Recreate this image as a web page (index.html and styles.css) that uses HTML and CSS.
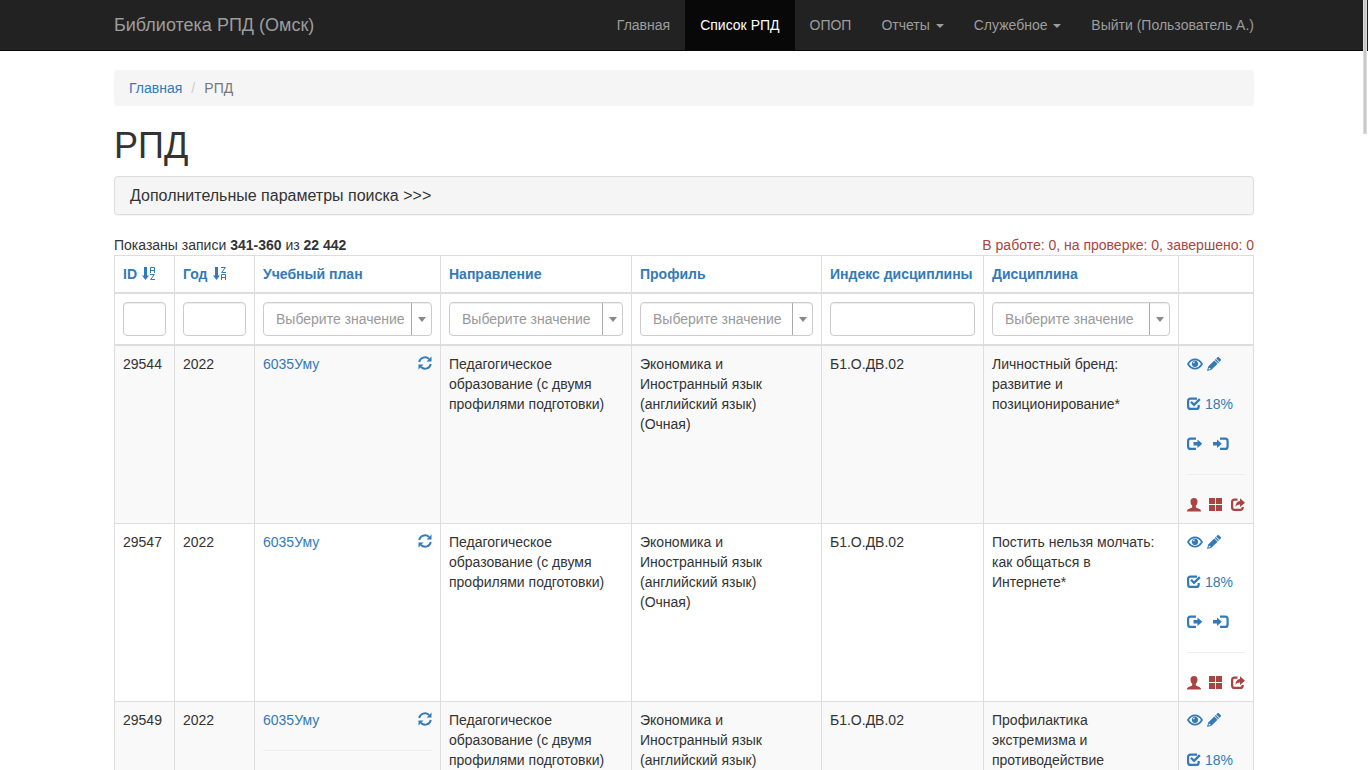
FILE: index.html
```html
<!DOCTYPE html>
<html lang="ru">
<head>
<meta charset="utf-8">
<meta name="viewport" content="width=device-width, initial-scale=1">
<title>РПД</title>
<link rel="stylesheet" href="styles.css">
</head>
<body>
<svg class="sprite" aria-hidden="true">
  <symbol id="eye" viewBox="0 0 16 14"><path fill="none" stroke="currentColor" stroke-width="1.700" d="M1 7C2.800 4 5.200 2.400 8 2.400S13.200 4 15 7c-1.800 3-4.200 4.600-7 4.600S2.800 10 1 7z"/><path fill-rule="evenodd" d="M8 3.600a3.200 3.200 0 1 0 .01 0zM7.800 4.400c-1.100 0-1.900.8-1.900 1.900h1c0-.6.300-.9.900-.9z"/></symbol>
  <symbol id="pencil" viewBox="0 0 14 14"><path d="M10.300.4c.6-.6 1.200-.6 1.800 0l1.500 1.500c.6.600.6 1.200 0 1.800l-1.100 1.100L9.200 1.500zM8.700 2l3.300 3.300-.9.900-3.300-3.300zM7.300 3.400l3.300 3.300-6.200 6.100L0 14l1.200-4.400zM2 10.500l-.5 1.600.5.500 1.500-.5-.2-1-1-.1z"/></symbol>
  <symbol id="check" viewBox="0 0 14 14"><path fill="none" stroke="currentColor" stroke-width="2.200" d="M10 1.600H3.600A2.500 2.500 0 0 0 1.100 4.100v5.300A2.500 2.500 0 0 0 3.600 11.900h5.600A2.500 2.500 0 0 0 11.700 9.400V8"/><path d="M3.200 5.600l1.600-1.600 2.200 2.200L12 1.200 13.700 2.900 7 9.600z"/></symbol>
  <symbol id="logout" viewBox="0 0 16 14"><path fill="none" stroke="currentColor" stroke-width="2.200" d="M9 1.600H3.600A2.500 2.500 0 0 0 1.100 4.100v5.300A2.500 2.500 0 0 0 3.600 11.900H9"/><path d="M6.500 5h4V2.600L15.300 6.800 10.500 11V8.600h-4z"/></symbol>
  <symbol id="login" viewBox="0 0 16 14"><path fill="none" stroke="currentColor" stroke-width="2.200" d="M7 1.600h5.100A2.500 2.500 0 0 1 14.600 4.100v5.300a2.500 2.500 0 0 1-2.500 2.500H7"/><path d="M0 5h4V2.600L8.800 6.800 4 11V8.600H0z"/></symbol>
  <symbol id="user" viewBox="0 0 14 14"><path d="M7 0C4.700 0 3.500 1.300 3.500 3.300c0 2 .6 3.500 1.700 4.500v1.400C4.300 10.200 1 10.700.4 11.900.1 12.300 0 12.900 0 13.500h14c0-.6-.1-1.200-.4-1.600C13 10.700 9.700 10.200 8.800 9.200V7.800c1.100-1 1.700-2.500 1.700-4.500C10.500 1.300 9.300 0 7 0z"/></symbol>
  <symbol id="tiles" viewBox="0 0 14 14"><path d="M0 0h6v6H0zM7 0h6v6H7zM0 7h6v6H0zM7 7h6v6H7z"/></symbol>
  <symbol id="share" viewBox="0 0 14 14"><path fill="none" stroke="currentColor" stroke-width="2.200" d="M6.500 1.600H3.600A2.500 2.500 0 0 0 1.100 4.100v5.300A2.500 2.500 0 0 0 3.600 11.900h5.600A2.500 2.500 0 0 0 11.700 9.400V9"/><path d="M9 .3L14 4.700 9 9V6.400c-2 0-3.500.6-4.500 2.600 0-3.400 1.700-5.500 4.500-5.900z"/></symbol>
  <symbol id="refresh" viewBox="0 0 14 14"><path fill="none" stroke="currentColor" stroke-width="1.900" d="M1.200 6A5.800 5.800 0 0 1 11 3M12.800 8A5.800 5.800 0 0 1 3 11"/><path d="M13.500.5v5h-5zM.5 13.500v-5h5z"/></symbol>
  <symbol id="sort-down" viewBox="0 0 14 14"><path d="M2 0h3v8.500h2L3.500 13 0 8.500h2z"/></symbol>
  <symbol id="sort-box" viewBox="0 0 5 6"><path fill="none" stroke="currentColor" d="M.5 6V.5h4V6M.5 3.500h4"/></symbol>
  <symbol id="sort-zig" viewBox="0 0 5 6"><path fill="none" stroke="currentColor" d="M0 .5h4.300L.7 5.500H5"/></symbol>
  <symbol id="sort-az" viewBox="0 0 14 14"><use href="#sort-down"/><use href="#sort-box" x="8" y="0" width="5" height="6"/><use href="#sort-zig" x="8" y="7" width="5" height="6"/></symbol>
  <symbol id="sort-za" viewBox="0 0 14 14"><use href="#sort-down"/><use href="#sort-zig" x="8" y="0" width="5" height="6"/><use href="#sort-box" x="8" y="7" width="5" height="6"/></symbol>
</svg>

<header class="navbar">
  <div class="container navbar-inner">
    <a class="brand" href="#">Библиотека РПД (Омск)</a>
    <nav class="nav">
      <a href="#">Главная</a>
      <a href="#" class="active" aria-current="page">Список РПД</a>
      <a href="#">ОПОП</a>
      <a href="#">Отчеты <span class="caret"></span></a>
      <a href="#">Служебное <span class="caret"></span></a>
      <a href="#">Выйти (Пользователь А.)</a>
    </nav>
  </div>
</header>

<main class="container content">
  <nav class="breadcrumb" aria-label="Навигация"><a href="#">Главная</a><span class="divider">/</span><span>РПД</span></nav>
  <h1>РПД</h1>
  <button class="panel-toggle" type="button">Дополнительные параметры поиска &gt;&gt;&gt;</button>
  <div class="summary">
    <div>Показаны записи <b>341-360</b> из <b>22 442</b></div>
    <div class="danger">В работе: 0, на проверке: 0, завершено: 0</div>
  </div>
  <table class="grid">
    <colgroup><col class="col-id"><col class="col-year"><col class="col-plan"><col class="col-direction"><col class="col-profile"><col class="col-index"><col class="col-discipline"><col></colgroup>
    <thead>
      <tr>
        <th><a class="sort" href="#">ID <svg class="icon"><use href="#sort-az"/></svg></a></th>
        <th><a class="sort" href="#">Год <svg class="icon"><use href="#sort-za"/></svg></a></th>
        <th><a href="#">Учебный план</a></th>
        <th><a href="#">Направление</a></th>
        <th><a href="#">Профиль</a></th>
        <th><a href="#">Индекс дисциплины</a></th>
        <th><a href="#">Дисциплина</a></th>
        <th></th>
      </tr>
      <tr>
        <td><input class="field" type="text" aria-label="ID"></td>
        <td><input class="field" type="text" aria-label="Год"></td>
        <td><div class="select"><select class="field" aria-label="Учебный план"><option>Выберите значение</option></select></div></td>
        <td><div class="select"><select class="field" aria-label="Направление"><option>Выберите значение</option></select></div></td>
        <td><div class="select"><select class="field" aria-label="Профиль"><option>Выберите значение</option></select></div></td>
        <td><input class="field" type="text" aria-label="Индекс дисциплины"></td>
        <td><div class="select"><select class="field" aria-label="Дисциплина"><option>Выберите значение</option></select></div></td>
        <td></td>
      </tr>
    </thead>
    <tbody>
      <tr>
        <td>29544</td><td>2022</td>
        <td><div class="plan"><a href="#">6035Уму</a><a href="#" aria-label="Обновить"><svg class="icon"><use href="#refresh"/></svg></a></div></td>
        <td>Педагогическое образование (с двумя профилями подготовки)</td>
        <td>Экономика и Иностранный язык (английский язык)<br>(Очная)</td>
        <td>Б1.О.ДВ.02</td>
        <td>Личностный бренд: развитие и позиционирование*</td>
        <td><div class="actions">
          <div class="line"><a href="#" aria-label="Просмотр"><svg class="icon wide"><use href="#eye"/></svg></a><a href="#" aria-label="Изменить"><svg class="icon"><use href="#pencil"/></svg></a></div>
          <div class="line"><a class="line" href="#"><svg class="icon"><use href="#check"/></svg>18%</a></div>
          <div class="line arrows"><a href="#" aria-label="Экспорт"><svg class="icon wide"><use href="#logout"/></svg></a><a href="#" aria-label="Импорт"><svg class="icon wide"><use href="#login"/></svg></a></div>
          <hr>
          <div class="line spread danger"><a href="#" aria-label="Пользователь"><svg class="icon"><use href="#user"/></svg></a><a href="#" aria-label="Разделы"><svg class="icon"><use href="#tiles"/></svg></a><a href="#" aria-label="Передать"><svg class="icon"><use href="#share"/></svg></a></div>
        </div></td>
      </tr>
      <tr>
        <td>29547</td><td>2022</td>
        <td><div class="plan"><a href="#">6035Уму</a><a href="#" aria-label="Обновить"><svg class="icon"><use href="#refresh"/></svg></a></div></td>
        <td>Педагогическое образование (с двумя профилями подготовки)</td>
        <td>Экономика и Иностранный язык (английский язык)<br>(Очная)</td>
        <td>Б1.О.ДВ.02</td>
        <td>Постить нельзя молчать: как общаться в<br>Интернете*</td>
        <td><div class="actions">
          <div class="line"><a href="#" aria-label="Просмотр"><svg class="icon wide"><use href="#eye"/></svg></a><a href="#" aria-label="Изменить"><svg class="icon"><use href="#pencil"/></svg></a></div>
          <div class="line"><a class="line" href="#"><svg class="icon"><use href="#check"/></svg>18%</a></div>
          <div class="line arrows"><a href="#" aria-label="Экспорт"><svg class="icon wide"><use href="#logout"/></svg></a><a href="#" aria-label="Импорт"><svg class="icon wide"><use href="#login"/></svg></a></div>
          <hr>
          <div class="line spread danger"><a href="#" aria-label="Пользователь"><svg class="icon"><use href="#user"/></svg></a><a href="#" aria-label="Разделы"><svg class="icon"><use href="#tiles"/></svg></a><a href="#" aria-label="Передать"><svg class="icon"><use href="#share"/></svg></a></div>
        </div></td>
      </tr>
      <tr>
        <td>29549</td><td>2022</td>
        <td><div class="plan"><a href="#">6035Уму</a><a href="#" aria-label="Обновить"><svg class="icon"><use href="#refresh"/></svg></a></div><hr class="plan-rule"></td>
        <td>Педагогическое образование (с двумя профилями подготовки)</td>
        <td>Экономика и Иностранный язык (английский язык)<br>(Очная)</td>
        <td>Б1.О.ДВ.02</td>
        <td>Профилактика экстремизма и противодействие</td>
        <td><div class="actions">
          <div class="line"><a href="#" aria-label="Просмотр"><svg class="icon wide"><use href="#eye"/></svg></a><a href="#" aria-label="Изменить"><svg class="icon"><use href="#pencil"/></svg></a></div>
          <div class="line"><a class="line" href="#"><svg class="icon"><use href="#check"/></svg>18%</a></div>
          <div class="line arrows"><a href="#" aria-label="Экспорт"><svg class="icon wide"><use href="#logout"/></svg></a><a href="#" aria-label="Импорт"><svg class="icon wide"><use href="#login"/></svg></a></div>
          <hr>
          <div class="line spread danger"><a href="#" aria-label="Пользователь"><svg class="icon"><use href="#user"/></svg></a><a href="#" aria-label="Разделы"><svg class="icon"><use href="#tiles"/></svg></a><a href="#" aria-label="Передать"><svg class="icon"><use href="#share"/></svg></a></div>
        </div></td>
      </tr>
    </tbody>
  </table>
</main>
<div class="scroll-thumb" aria-hidden="true"></div>
</body>
</html>
```
FILE: styles.css
```css
* { box-sizing: border-box; }
html { scrollbar-width: none; }
body {
  margin: 0;
  background: #fff;
  color: #333;
  font: 14px/20px "Liberation Sans", Arial, sans-serif;
}
a { color: #337ab7; text-decoration: none; }
hr { width: 100%; margin: 0; border: 0; border-top: 1px solid #eee; }
.sprite { position: absolute; width: 0; height: 0; }
.icon { display: block; width: 14px; height: 14px; fill: currentColor; flex: none; }
.icon.wide { width: 16px; }
.danger, .danger a { color: #a94442; }

.container { max-width: 1170px; margin: 0 auto; padding: 0 15px; }
.navbar { background: #222; border-bottom: 1px solid #080808; }
.navbar-inner { display: flex; justify-content: space-between; }
.brand { padding: 15px 0; font-size: 18px; color: #9d9d9d; }
.nav { display: flex; }
.nav a { padding: 15px; color: #9d9d9d; }
.nav a:last-child { padding-right: 0; }
.nav a.active { background: #080808; color: #fff; }
.caret {
  display: inline-block;
  margin-left: 2px;
  vertical-align: middle;
  border-top: 4px solid;
  border-left: 4px solid transparent;
  border-right: 4px solid transparent;
}

.content { padding-top: 19px; }
.breadcrumb {
  display: flex;
  padding: 8px 15px;
  background: #f5f5f5;
  border-radius: 4px;
  color: #777;
}
.divider { width: 22px; text-align: center; color: #ccc; }
h1 { margin: 20px 0 10px; font-size: 36px; line-height: 40px; font-weight: 500; }
.panel-toggle {
  display: block;
  width: 100%;
  padding: 10px 15px;
  border: 1px solid #ddd;
  border-radius: 4px;
  background: #f5f5f5;
  box-shadow: 0 1px 1px rgba(0, 0, 0, .05);
  color: #333;
  font: 16px/17px "Liberation Sans", Arial, sans-serif;
  text-align: left;
}
.summary { display: flex; justify-content: space-between; margin-top: 20px; }

.grid { width: 100%; table-layout: fixed; border-collapse: collapse; border: 1px solid #ddd; }
.col-id { width: 60px; }
.col-year { width: 80px; }
.col-plan { width: 186px; }
.col-direction { width: 191px; }
.col-profile { width: 190px; }
.col-index { width: 162px; }
.col-discipline { width: 195px; }
.grid th, .grid td { padding: 8px; border: 1px solid #ddd; text-align: left; vertical-align: top; }
.grid thead th, .grid thead td { border-bottom-width: 2px; }
.grid th { white-space: nowrap; }
.grid tbody tr:nth-child(odd) { background: #f9f9f9; }
.sort { display: flex; align-items: center; gap: 5px; }

.field {
  display: block;
  width: 100%;
  height: 34px;
  padding: 6px 12px;
  border: 1px solid #ccc;
  border-radius: 4px;
  background: #fff;
  box-shadow: inset 0 1px 1px rgba(0, 0, 0, .075);
  color: #555;
  font: inherit;
}
.select { position: relative; }
.select .field { padding-right: 20px; appearance: none; color: #999; }
.select::before, .select::after { content: ""; position: absolute; pointer-events: none; }
.select::before { top: 1px; bottom: 1px; right: 20px; border-left: 1px solid #aaa; }
.select::after {
  top: 15px;
  right: 6px;
  border-top: 5px solid #888;
  border-left: 4px solid transparent;
  border-right: 4px solid transparent;
}

.plan { display: flex; justify-content: space-between; }
.plan .icon { margin-top: 2px; }
.plan-rule { margin: 20px 0; }
.actions { display: flex; flex-direction: column; gap: 20px; }
.line { display: flex; align-items: center; gap: 4px; height: 20px; }
.arrows { gap: 10px; }
.spread { gap: 8px; }

.scroll-thumb { position: fixed; top: 0; right: 1px; width: 4px; height: 134px; background: #c8c8c8; border: 1px solid #ddd; border-top: 0; }
```
